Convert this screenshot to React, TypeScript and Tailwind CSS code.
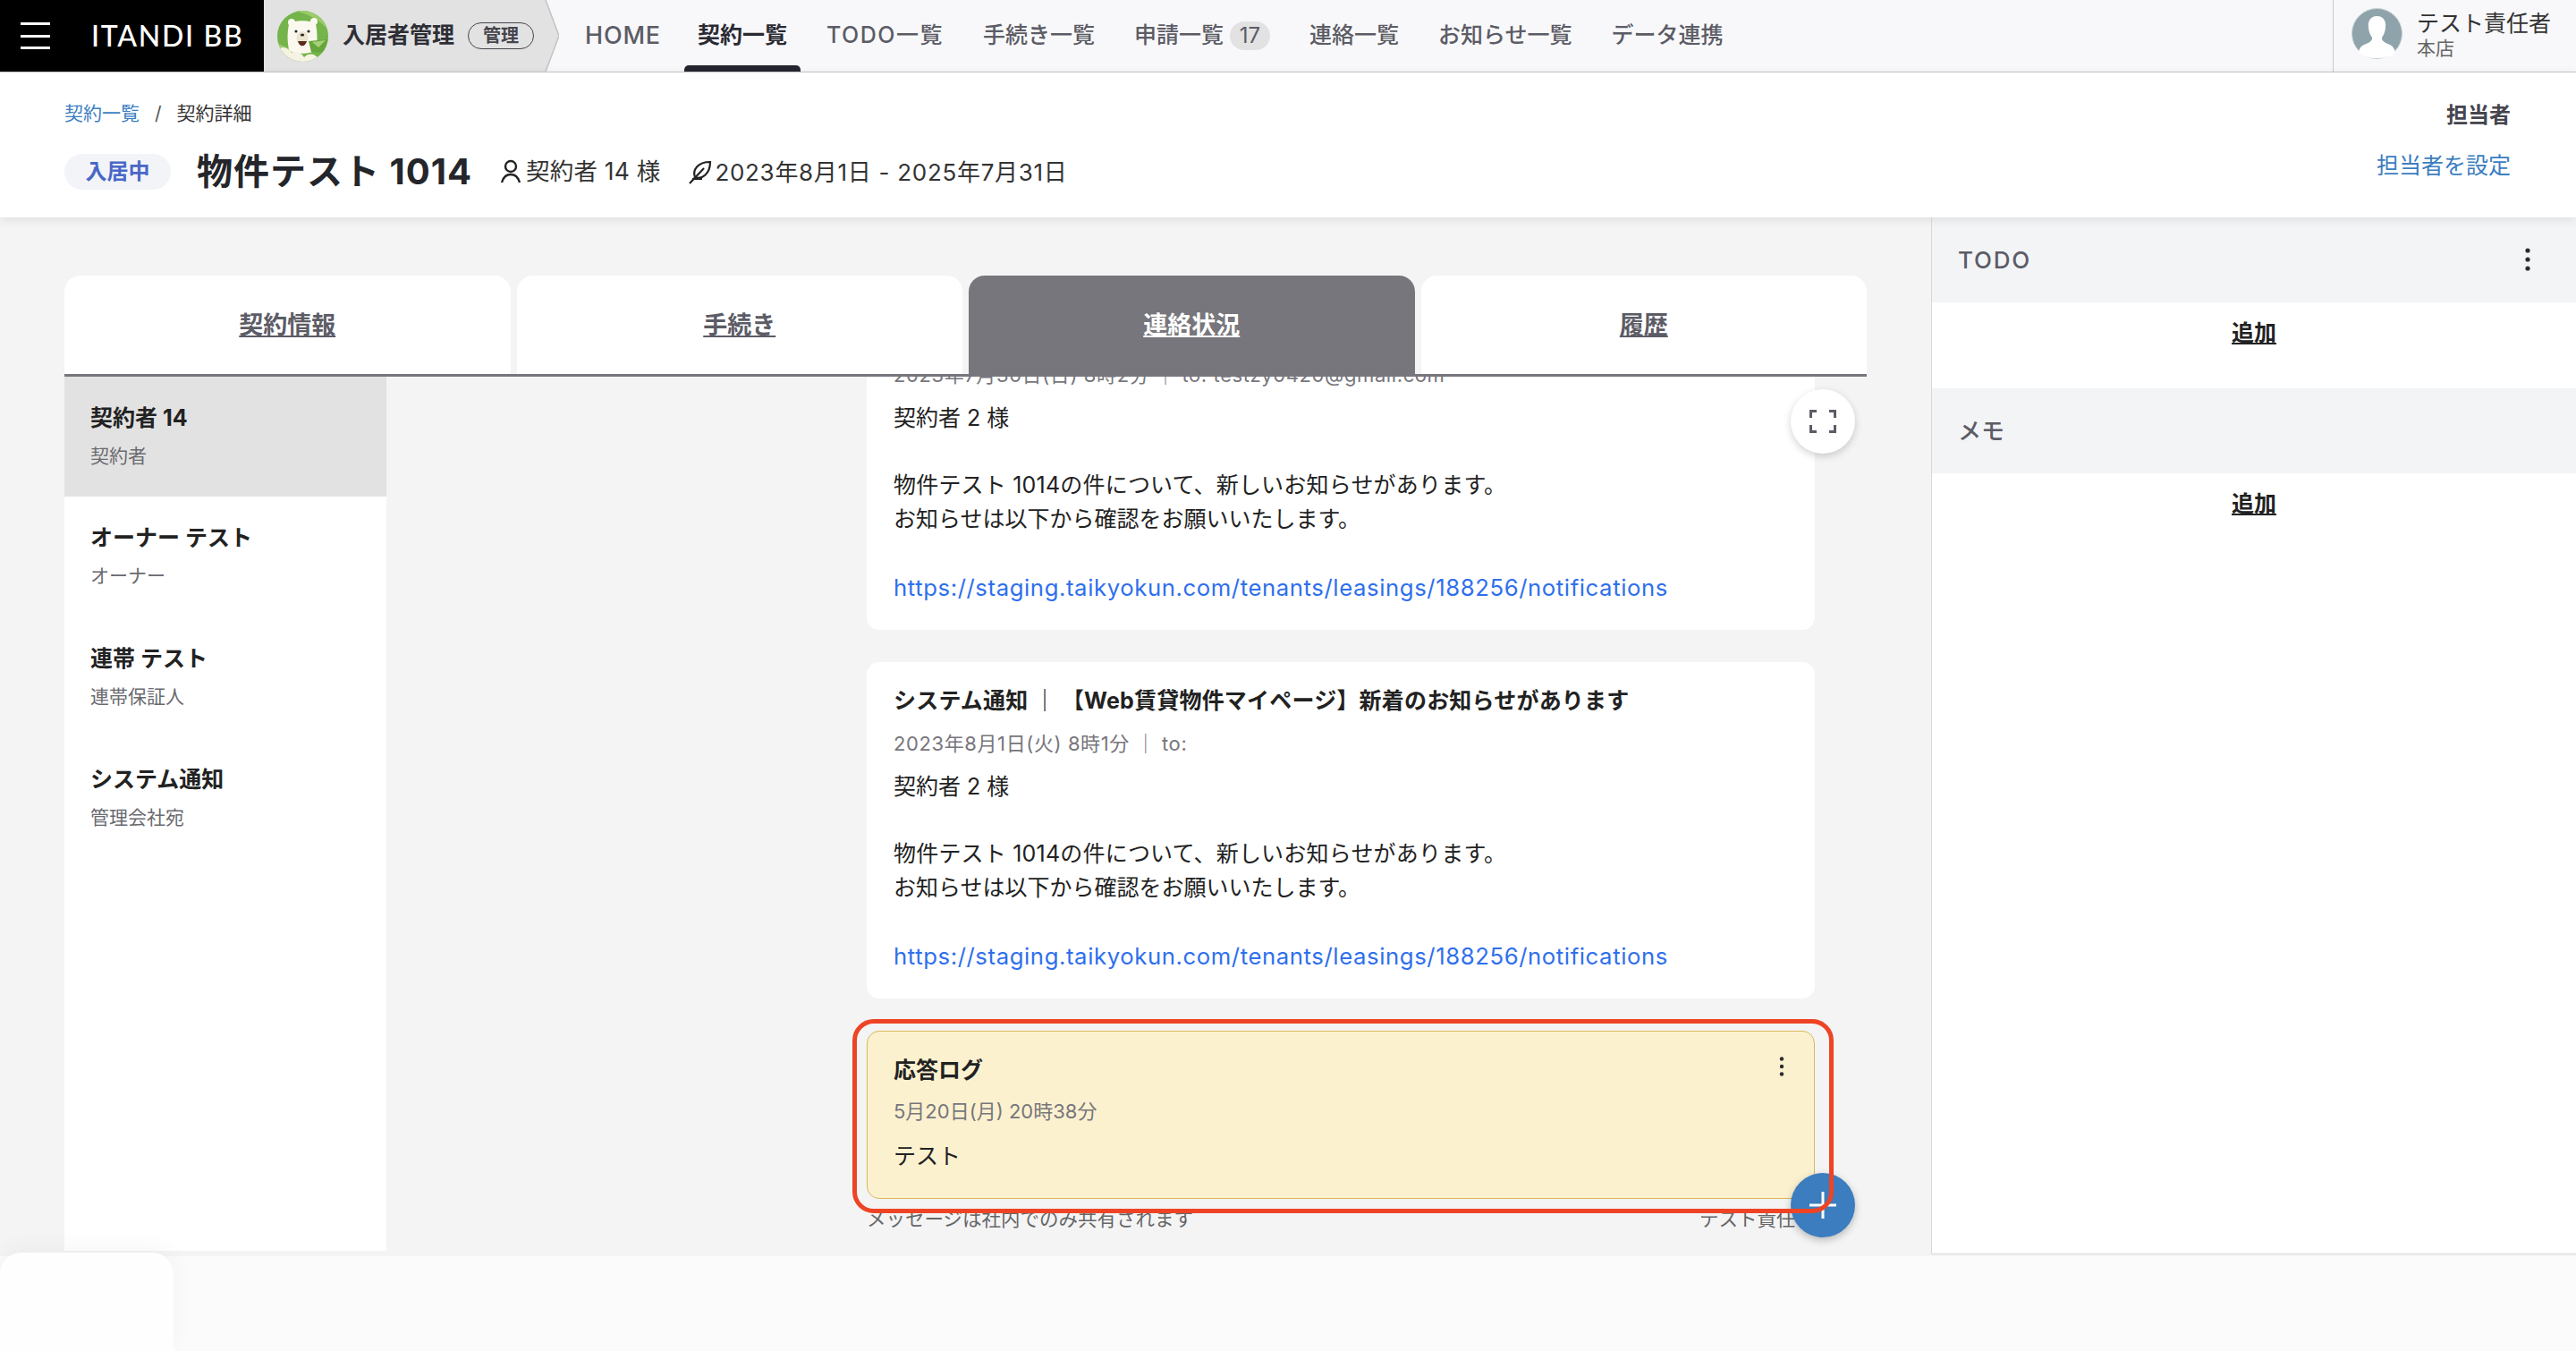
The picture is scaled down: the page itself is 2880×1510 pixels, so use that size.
const font = { fontFamily: 'Inter, "Noto Sans CJK JP", sans-serif' };

function BearLogo() {
  return (
    <svg width="57" height="57" viewBox="0 0 57 57" className="shrink-0">
      <defs>
        <clipPath id="bear-clip">
          <circle cx="28.5" cy="28.5" r="28.5" />
        </clipPath>
      </defs>
      <g clipPath="url(#bear-clip)">
        <rect width="57" height="57" fill="#74b44a" />
        <path d="M18 0 C34 3 48 10 57 22 V0 Z" fill="#9ccb6a" />
        <path d="M0 36 C8 40 16 44 24 48 L0 57 Z" fill="#9ccb6a" />
        {/* head */}
        <g transform="translate(5 0)">
          <circle cx="11" cy="13" r="4" fill="#fbf9ef" />
          <circle cx="36" cy="12" r="4" fill="#fbf9ef" />
          <path d="M8 15 C13 10 33 10 38 15 C40 24 40 36 38 44 C32 49 14 49 8 44 C6 34 6 24 8 15 Z" fill="#fbf9ef" />
          <circle cx="16" cy="23" r="1.6" fill="#2b2b2b" />
          <circle cx="30" cy="23" r="1.6" fill="#2b2b2b" />
          <ellipse cx="23" cy="31" rx="6.5" ry="8" fill="#ece4cf" />
          <ellipse cx="23" cy="27" rx="2.2" ry="1.6" fill="#2b2b2b" />
          <path d="M18 34 C20 41 26 41 28 34 Z" fill="#5b2a1e" />
        </g>
        {/* leaf */}
        <path d="M35 34 L57 32 L52 47 L38 46 Z" fill="#66a63c" />
        <path d="M39 35 L54 33 L46 41 Z" fill="#a6d179" />
        {/* snow */}
        <path d="M0 44 C6 38 12 42 16 47 C22 44 28 48 30 52 C36 46 44 48 48 57 H0 Z" fill="#f6f3e4" />
      </g>
    </svg>
  );
}

function AvatarIcon() {
  return (
    <svg width="57" height="57" viewBox="0 0 57 57" className="shrink-0">
      <circle cx="28.5" cy="28.5" r="28" fill="#8fa3ab" stroke="#c5d0d4" strokeWidth="1" />
      <path
        d="M28.5 9 C21 9 18 15 19 22 C19.5 27 21 30 23 33 C23.5 37 19 39 14 41 C9 43 8 48 8.5 50 C13 54 20 56 28.5 56 C37 56 44 54 48.5 50 C49 47 47 43 43 41 C38 39 33.5 37 34 33 C36 30 37.5 27 38 22 C39 15 36 9 28.5 9 Z"
        fill="#ffffff"
      />
    </svg>
  );
}

function ThreeDots({ h = 26 }: { h?: number }) {
  return (
    <svg width="8" height={h} viewBox="0 0 8 26" className="block">
      <circle cx="4" cy="3" r="2.6" fill="#2b2b33" />
      <circle cx="4" cy="13" r="2.6" fill="#2b2b33" />
      <circle cx="4" cy="23" r="2.6" fill="#2b2b33" />
    </svg>
  );
}

function MessageBody() {
  return (
    <div className="text-[25px] leading-[37.5px] text-[#222222]">
      <div>契約者 2 様</div>
      <div className="h-[37.5px]" />
      <div className="tracking-[0.2px]">物件テスト 1014の件について、新しいお知らせがあります。</div>
      <div>お知らせは以下から確認をお願いいたします。</div>
      <div className="h-[37.5px]" />
      <div className="mt-[1px] text-[25.7px] tracking-[0.6px] text-[#2f6fed]">https://staging.taikyokun.com/tenants/leasings/188256/notifications</div>
    </div>
  );
}

function SideItem({ title, sub, active }: { title: string; sub: string; active?: boolean }) {
  return (
    <div className={`pl-[29px] pt-[28px] ${active ? "h-[134px] bg-[#e2e2e2]" : "h-[135px]"}`}>
      <div className="text-[25px] leading-[36px] font-bold text-[#222222]">{title}</div>
      <div className="mt-[8px] text-[21px] leading-[34px] text-[#6a6a70]">{sub}</div>
    </div>
  );
}

function PanelSection({ title, dots }: { title: string; dots?: boolean }) {
  return (
    <div>
      <div className="h-[95px] bg-[#f3f4f6] flex items-center justify-between pl-[29px] pr-[50px] pb-[1px]">
        <span className={`text-[26px] font-medium text-[#5c5c66] ${dots ? "tracking-[1.8px]" : ""}`}>{title}</span>
        {dots && <ThreeDots />}
      </div>
      <div className="h-[96px] flex justify-center pt-[16px]">
        <span className="text-[25px] leading-[36px] font-bold underline text-[#222222]">追加</span>
      </div>
    </div>
  );
}

export default function App() {
  return (
    <div style={font} className="relative w-[2880px] h-[1510px] overflow-hidden flex flex-col bg-[#f4f4f5]">
      {/* Top bar */}
      <div className="h-[81px] shrink-0 flex bg-[#f8f8fa] border-b border-[#c9c9c9]">
        <div className="w-[295px] bg-black flex items-center pl-[23px]">
          <div className="w-[33px] flex flex-col gap-[10.5px]">
            <div className="h-[3px] bg-white" />
            <div className="h-[3px] bg-white" />
            <div className="h-[3px] bg-white" />
          </div>
          <span
            style={{ fontFamily: "Lato, sans-serif" }}
            className="ml-[46px] text-[32px] leading-none font-medium tracking-[1.7px] text-white whitespace-nowrap"
          >
            ITANDI BB
          </span>
        </div>
        <div className="relative w-[330px] h-[80px] shrink-0">
          <svg width="330" height="80" viewBox="0 0 330 80" className="absolute inset-0">
            <path d="M0 0 H315 L330 40 L315 80 H0 Z" fill="#e2e2e2" />
            <path d="M315 0 L330 40 L315 80" fill="none" stroke="#c4c4c4" strokeWidth="1.5" />
          </svg>
          <div className="relative h-full flex items-center pl-[15px]">
            <BearLogo />
            <span className="ml-[16px] text-[25px] font-bold text-[#2e2e36] whitespace-nowrap">入居者管理</span>
            <span className="ml-[15px] h-[30px] w-[74px] rounded-full border border-[#45454d] flex items-center justify-center text-[20px] font-bold text-[#45454d]">
              管理
            </span>
          </div>
        </div>
        <div className="flex-1 flex items-center pl-[29px] text-[25px] font-medium text-[#5c5c66] whitespace-nowrap">
          <span className="mr-[41px] text-[27px] tracking-[0.8px]">HOME</span>
          <span className="relative mr-[44px] h-full flex items-center font-bold text-[#2a2a33]">
            契約一覧
            <span className="absolute left-[-15px] right-[-15px] bottom-0 h-[7px] rounded-t-[5px] bg-[#25252f]" />
          </span>
          <span className="mr-[44px] tracking-[1.5px]">TODO一覧</span>
          <span className="mr-[44px]">手続き一覧</span>
          <span>申請一覧</span>
          <span className="ml-[7px] mr-[44px] w-[45px] h-[32px] rounded-full bg-[#e2e2e2] flex items-center justify-center text-[24px] font-normal">
            17
          </span>
          <span className="mr-[44px]">連絡一覧</span>
          <span className="mr-[44px]">お知らせ一覧</span>
          <span>データ連携</span>
        </div>
        <div className="w-[272px] shrink-0 border-l border-[#c9c9c9] flex items-center pl-[20px] pb-[5px]">
          <AvatarIcon />
          <div className="ml-[16px]">
            <div className="text-[25px] leading-[32px] text-[#333333]">テスト責任者</div>
            <div className="text-[21px] leading-[24px] text-[#666666]">本店</div>
          </div>
        </div>
      </div>

      {/* Contract header */}
      <div className="relative z-20 h-[162px] shrink-0 bg-white shadow-[0_2px_10px_rgba(0,0,0,0.1)] flex justify-between pl-[72px] pr-[73px]">
        <div>
          <div className="mt-[30px] flex items-center text-[21px] leading-[32px]">
            <span className="text-[#3b7dbf]">契約一覧</span>
            <span className="mx-[17px] text-[#555555]">/</span>
            <span className="text-[#333333]">契約詳細</span>
          </div>
          <div className="mt-[24px] flex items-center">
            <span className="w-[119px] h-[40px] rounded-full bg-[#f2f4f8] flex items-center justify-center text-[24px] font-bold text-[#4a67c7]">
              入居中
            </span>
            <span className="ml-[29px] text-[40px] leading-[50px] font-bold tracking-[1px] text-[#24262b]">
              物件テスト 1014
            </span>
            <svg width="22" height="28" viewBox="0 0 22 28" fill="none" stroke="#222" strokeWidth="2.4" className="ml-[32px]">
              <circle cx="11" cy="8" r="6" />
              <path d="M1 26 C3 19 7 17 11 17 C15 17 19 19 21 26" />
            </svg>
            <span className="ml-[6px] text-[26.5px] tracking-[0.2px] text-[#333333]">契約者 14 様</span>
            <svg width="28" height="28" viewBox="0 0 28 28" fill="none" stroke="#222" strokeWidth="2.2" className="ml-[31px]">
              <path d="M8 20 C5 12 11 3 25 3 C25 16 16 23 8 20 Z" />
              <path d="M2 27 L18 10" />
              <path d="M5 22 H16" />
            </svg>
            <span className="ml-[2px] text-[26px] tracking-[0.7px] text-[#333333]">2023年8月1日 - 2025年7月31日</span>
          </div>
        </div>
        <div className="flex flex-col items-end">
          <div className="mt-[32px] text-[24px] leading-[32px] font-bold text-[#45454d]">担当者</div>
          <div className="mt-[24px] text-[25px] leading-[32px] text-[#3b7dbf]">担当者を設定</div>
        </div>
      </div>

      {/* Main */}
      <div className="flex-1 min-h-0 flex overflow-hidden">
        <div className="w-[2159px] shrink-0 pl-[72px] pr-[72px] pt-[65px] pb-[6px] flex flex-col">
          <div className="relative z-10 h-[113px] shrink-0 grid grid-cols-4 gap-[7px] border-b-[3px] border-[#77767c] text-[27px] font-bold">
            <div className="rounded-t-[18px] bg-white flex items-center justify-center pt-[2px] text-[#5c5c66] underline">契約情報</div>
            <div className="rounded-t-[18px] bg-white flex items-center justify-center pt-[2px] text-[#5c5c66] underline">手続き</div>
            <div className="rounded-t-[18px] bg-[#77767c] flex items-center justify-center pt-[2px] text-white underline">連絡状況</div>
            <div className="rounded-t-[18px] bg-white flex items-center justify-center pt-[2px] text-[#5c5c66] underline">履歴</div>
          </div>
          <div className="flex-1 min-h-0 flex">
            <div className="w-[360px] shrink-0 bg-white">
              <SideItem title="契約者 14" sub="契約者" active />
              <SideItem title="オーナー テスト" sub="オーナー" />
              <SideItem title="連帯 テスト" sub="連帯保証人" />
              <SideItem title="システム通知" sub="管理会社宛" />
            </div>
            {/* Thread */}
            <div className="flex-1 min-h-0 overflow-hidden flex flex-col justify-end pl-[537px] pr-[58px]">
              <div className="shrink-0 rounded-[14px] bg-white px-[30px] pt-[27px] h-[376px] mb-[36px]">
                <div className="text-[25px] leading-[32px] font-bold tracking-[0.2px] text-[#222222]">システム通知 ｜ 【Web賃貸物件マイページ】新着のお知らせがあります</div>
                <div className="mt-[16px] text-[22px] leading-[32px] tracking-[0.6px] text-[#77767c]">2023年7月30日(日) 8時2分 ｜ to: testzy0420@gmail.com</div>
                <div className="mt-[14px]"><MessageBody /></div>
              </div>
              <div className="shrink-0 rounded-[14px] bg-white px-[30px] pt-[27px] h-[376px] mb-[36px]">
                <div className="text-[25px] leading-[32px] font-bold tracking-[0.2px] text-[#222222]">システム通知 ｜ 【Web賃貸物件マイページ】新着のお知らせがあります</div>
                <div className="mt-[16px] text-[22px] leading-[32px] tracking-[0.6px] text-[#77767c]">2023年8月1日(火) 8時1分 ｜ to:</div>
                <div className="mt-[14px]"><MessageBody /></div>
              </div>
              <div className="shrink-0 h-[188px] rounded-[14px] border border-[#d9b95a] bg-[#fcf1cf] pl-[29px] pr-[32px] pt-[25px]">
                <div className="flex items-start justify-between">
                  <span className="text-[25px] leading-[36px] font-bold text-[#222222]">応答ログ</span>
                  <span className="mt-[3px]"><ThreeDots h={22} /></span>
                </div>
                <div className="mt-[12px] text-[22px] leading-[32px] text-[#77767c]">5月20日(月) 20時38分</div>
                <div className="mt-[16px] text-[25px] leading-[36px] text-[#222222]">テスト</div>
              </div>
              <div className="shrink-0 h-[30px] mt-[7px] mb-[21px] flex justify-between text-[21.5px] leading-[30px] text-[#666666]">
                <span>メッセージは社内でのみ共有されます</span>
                <span>テスト責任者</span>
              </div>
            </div>
          </div>
        </div>

        {/* Right panel */}
        <div className="flex-1 bg-white border-l border-b border-[#d9d9d9] mb-[2px]">
          <PanelSection title="TODO" dots />
          <PanelSection title="メモ" />
        </div>
      </div>

      {/* Bottom strip */}
      <div className="h-[106px] shrink-0 bg-[#fbfbfb]" />

      {/* Overlays */}
      <div className="absolute left-0 top-[1400px] w-[194px] h-[110px] rounded-t-[24px] bg-[#fefefe] shadow-[0_-6px_24px_rgba(0,0,0,0.04)]" />
      <div className="absolute z-20 left-[2002px] top-[435px] w-[72px] h-[72px] rounded-full bg-white shadow-[0_3px_8px_rgba(0,0,0,0.18)] flex items-center justify-center">
        <svg width="30" height="26" viewBox="0 0 30 26" fill="none" stroke="#5c5c66" strokeWidth="3">
          <path d="M1.5 9 V1.5 H8" />
          <path d="M22 1.5 H28.5 V9" />
          <path d="M1.5 17 V24.5 H8" />
          <path d="M22 24.5 H28.5 V17" />
        </svg>
      </div>
      <div className="absolute z-20 left-[2002px] top-[1311px] w-[72px] h-[72px] rounded-full bg-[#3b7dbf] shadow-[0_3px_8px_rgba(0,0,0,0.25)] flex items-center justify-center">
        <svg width="30" height="30" viewBox="0 0 30 30" fill="none" stroke="#ffffff" strokeWidth="3">
          <path d="M15 0 V30 M0 15 H30" />
        </svg>
      </div>
      <div className="absolute z-30 left-[953px] top-[1139px] w-[1097px] h-[217px] rounded-[24px] border-[5px] border-[#ee4425]" />
    </div>
  );
}
